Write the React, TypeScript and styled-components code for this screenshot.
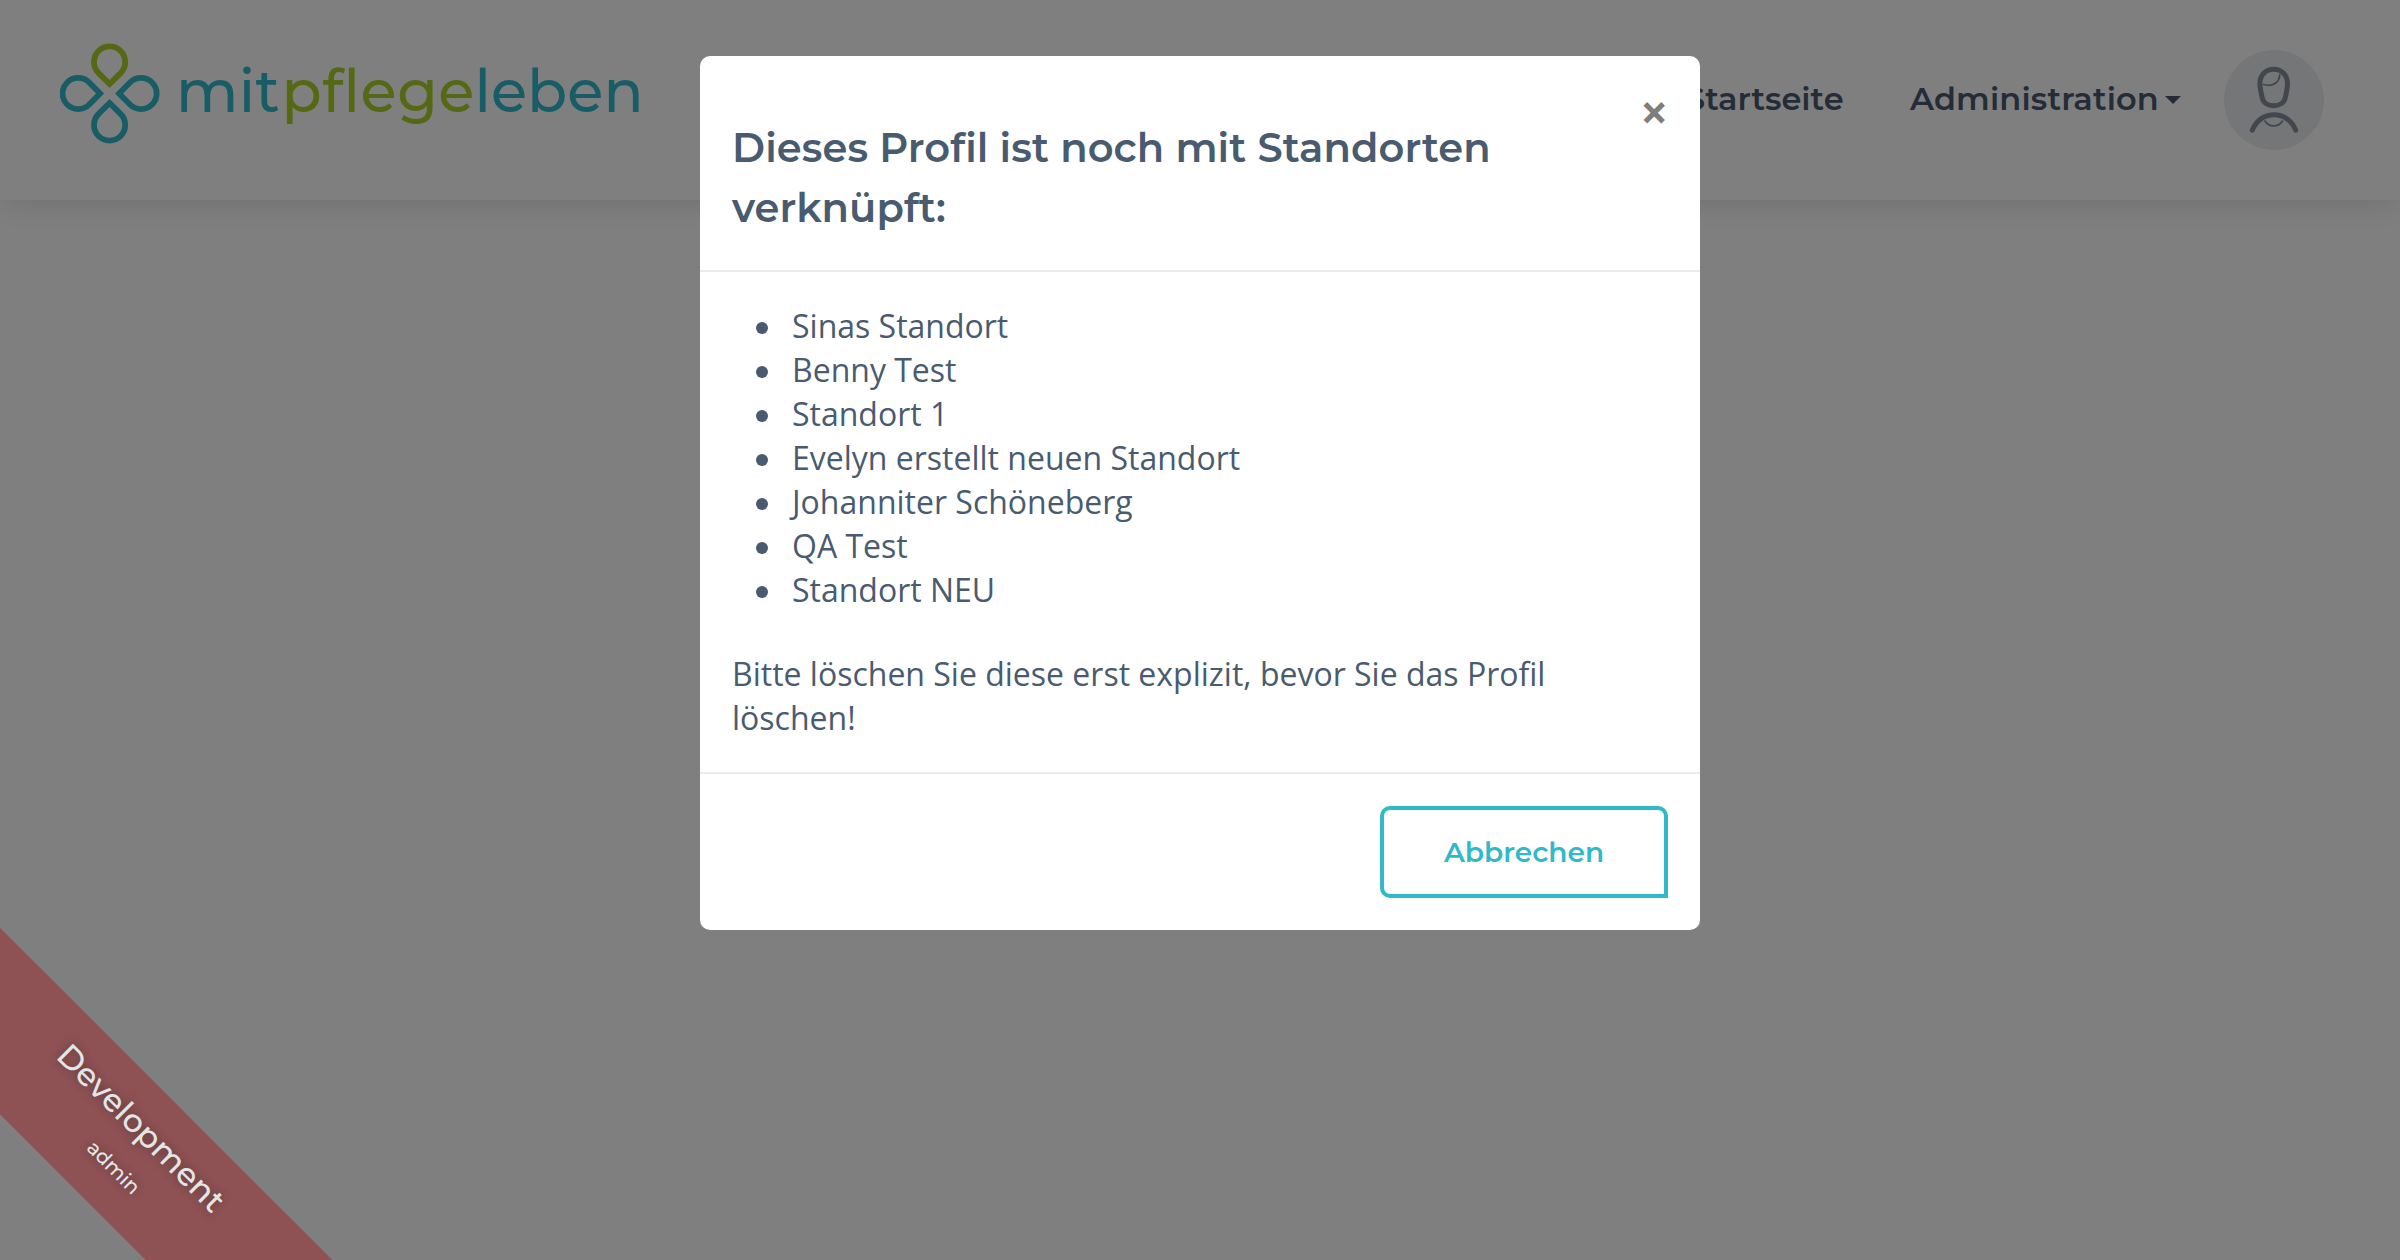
import React from "react";
import styled, { createGlobalStyle } from "styled-components";

const heading = `"Montserrat", "Inter", "Open Sans", sans-serif`;

const GlobalStyle = createGlobalStyle`
  *, *::before, *::after { box-sizing: border-box; }
  html, body { margin: 0; height: 100%; overflow: hidden; background: #fff; }
  body { font-family: "Open Sans", "Noto Sans", sans-serif; font-size: 32px; line-height: 44px; color: #495b6f; }
`;

const Page = styled.div`
  position: relative;
  width: 2400px;
  height: 1260px;
  overflow: hidden;
  background: #fff;
`;

const Header = styled.header`
  display: flex;
  align-items: flex-start;
  justify-content: space-between;
  height: 200px;
  padding: 43px 76px 0 60px;
  background: #fff;
  box-shadow: 0 8px 28px rgba(0, 0, 0, 0.09);
`;

const Brand = styled.a`
  display: flex;
  align-items: flex-start;
  gap: 16px;
`;

const LogoMark = styled.svg`
  width: 100px;
  height: 101px;
`;

const BrandName = styled.span`
  display: flex;
  margin-top: 12px;
  font-family: ${heading};
  font-size: 59px;
  font-weight: 500;
  line-height: 72px;
`;

const Part = styled.span<{ $width: number; $spacing?: number; $green?: boolean }>`
  width: ${(p) => p.$width}px;
  letter-spacing: ${(p) => p.$spacing ?? 0}px;
  white-space: nowrap;
  color: ${(p) => (p.$green ? "#abd028" : "#30bbca")};
`;

const Nav = styled.nav`
  display: flex;
  align-items: flex-start;
  padding-top: 7px;
`;

const NavLink = styled.a<{ $width: number; $spacing?: number }>`
  display: flex;
  align-items: center;
  width: ${(p) => p.$width}px;
  height: 97px;
  font-family: ${heading};
  font-size: 32px;
  font-weight: 600;
  letter-spacing: ${(p) => p.$spacing ?? 0}px;
  white-space: nowrap;
  color: #495b6f;
`;

const Caret = styled.span`
  margin-left: 6px;
  margin-top: 3px;
  border: 8.5px solid transparent;
  border-top: 8px solid #495b6f;
  border-bottom: 0;
`;

const Avatar = styled.svg`
  width: 100px;
  height: 100px;
`;

const Ribbon = styled.div`
  position: absolute;
  left: -175.6px;
  top: 1078.9px;
  width: 600px;
  height: 132px;
  padding-top: 18px;
  transform: rotate(45deg);
  background: #94474a;
  opacity: 0.8;
  text-align: center;
  color: #fff;
  font-family: ${heading};
  font-weight: 500;
  text-shadow: 0 0 10px rgba(0, 0, 0, 0.5);
`;

const RibbonTitle = styled.div`
  font-size: 32px;
  line-height: 48px;
`;

const RibbonUser = styled.div`
  margin-top: 8px;
  padding-left: 17px;
  font-size: 20px;
  line-height: 30px;
`;

const Backdrop = styled.div`
  position: absolute;
  inset: 0;
  display: flex;
  justify-content: center;
  align-items: flex-start;
  padding-top: 56px;
  background: rgba(0, 0, 0, 0.5);
`;

const Dialog = styled.section`
  width: 1000px;
  height: 874px;
  display: flex;
  flex-direction: column;
  border-radius: 10px;
  background: #fff;
`;

const DialogHeader = styled.div`
  display: flex;
  justify-content: space-between;
  height: 216px;
  padding: 62px 32px 0;
  border-bottom: 2px solid #e9ecef;
`;

const Title = styled.h2`
  margin: 0;
  width: 800px;
  font-family: ${heading};
  font-size: 40px;
  font-weight: 600;
  line-height: 60px;
  letter-spacing: 0.1px;
  font-variant-ligatures: none;
  color: #495b6f;
`;

const Close = styled.button`
  margin: -36px 0 0;
  padding: 0;
  border: 0;
  height: 60px;
  background: none;
  font: 700 48px/48px "Open Sans", sans-serif;
  color: #000;
  opacity: 0.5;
`;

const DialogBody = styled.div`
  height: 502px;
  padding: 32px 32px 0;
  border-bottom: 2px solid #e9ecef;
`;

const List = styled.ul`
  margin: 0 0 40px;
  padding: 0;
  list-style: none;
`;

const Item = styled.li`
  display: flex;
  gap: 24px;
  padding-left: 24px;

  &::before {
    content: "";
    width: 12px;
    height: 12px;
    margin-top: 18px;
    border-radius: 50%;
    background: #495b6f;
  }
`;

const Note = styled.p`
  margin: 0;
`;

const DialogFooter = styled.div`
  display: flex;
  justify-content: flex-end;
  padding: 32px;
`;

const CancelButton = styled.button`
  width: 288px;
  height: 92px;
  padding: 0;
  border: 4px solid #30b9c9;
  border-radius: 10px 10px 0 10px;
  background: #fff;
  font-family: ${heading};
  font-size: 28px;
  font-weight: 600;
  color: #30b9c9;
`;

const locations = [
  "Sinas Standort",
  "Benny Test",
  "Standort 1",
  "Evelyn erstellt neuen Standort",
  "Johanniter Schöneberg",
  "QA Test",
  "Standort NEU",
];

const petal = "M49.6 41 L38.6 30.1 A15.6 15.6 0 1 1 60.6 30.1 Z";

export default function App() {
  return (
    <Page>
      <GlobalStyle />
      <Header>
        <Brand>
          <LogoMark viewBox="0 0 100 101" fill="none" strokeWidth="5.8" stroke="#30bbca">
            <path d={petal} stroke="#abd028" />
            <path d={petal} transform="rotate(90 49.6 50.5)" />
            <path d={petal} transform="rotate(180 49.6 50.5)" />
            <path d={petal} transform="rotate(270 49.6 50.5)" />
          </LogoMark>
          <BrandName>
            <Part $width={105.5} $spacing={0.3}>mit</Part>
            <Part $width={193} $spacing={0.5} $green>pflege</Part>
            <Part $width={170}>leben</Part>
          </BrandName>
        </Brand>
        <Nav>
          <NavLink $width={225}>Startseite</NavLink>
          <NavLink $width={314} $spacing={0.15}>
            Administration
            <Caret />
          </NavLink>
          <Avatar viewBox="0 0 100 100" fill="none" stroke="#868f9a" strokeLinecap="round">
            <circle cx="50" cy="50" r="50" fill="#e9ecf0" stroke="none" />
            <path
              d="M49.7 19.3 C41.7 19.3 35.9 25.3 35.9 33.5 C35.9 37.5 37.5 44.5 38.2 47.8 C39.3 53 44 55.8 49.7 55.8 S60.1 53 61.2 47.8 C62 44.5 63.5 37.5 63.5 33.5 C63.5 25.3 57.7 19.3 49.7 19.3 Z"
              strokeWidth="5"
            />
            <path d="M39.5 34.5 C48 37 55.5 33 55.7 24.7" strokeWidth="1.8" />
            <path d="M28.3 80.2 C32 70.5 40.5 64.8 50 64.8 S68 70.5 71.7 80.2" strokeWidth="5" />
            <path d="M41 71 C45 77.5 54.5 77.5 58.5 71" strokeWidth="1.8" />
          </Avatar>
        </Nav>
      </Header>
      <Backdrop>
        <Dialog>
          <DialogHeader>
            <Title>Dieses Profil ist noch mit Standorten verknüpft:</Title>
            <Close>×</Close>
          </DialogHeader>
          <DialogBody>
            <List>
              {locations.map((name) => (
                <Item key={name}>{name}</Item>
              ))}
            </List>
            <Note>Bitte löschen Sie diese erst explizit, bevor Sie das Profil löschen!</Note>
          </DialogBody>
          <DialogFooter>
            <CancelButton>Abbrechen</CancelButton>
          </DialogFooter>
        </Dialog>
      </Backdrop>
      <Ribbon>
        <RibbonTitle>Development</RibbonTitle>
        <RibbonUser>admin</RibbonUser>
      </Ribbon>
    </Page>
  );
}
